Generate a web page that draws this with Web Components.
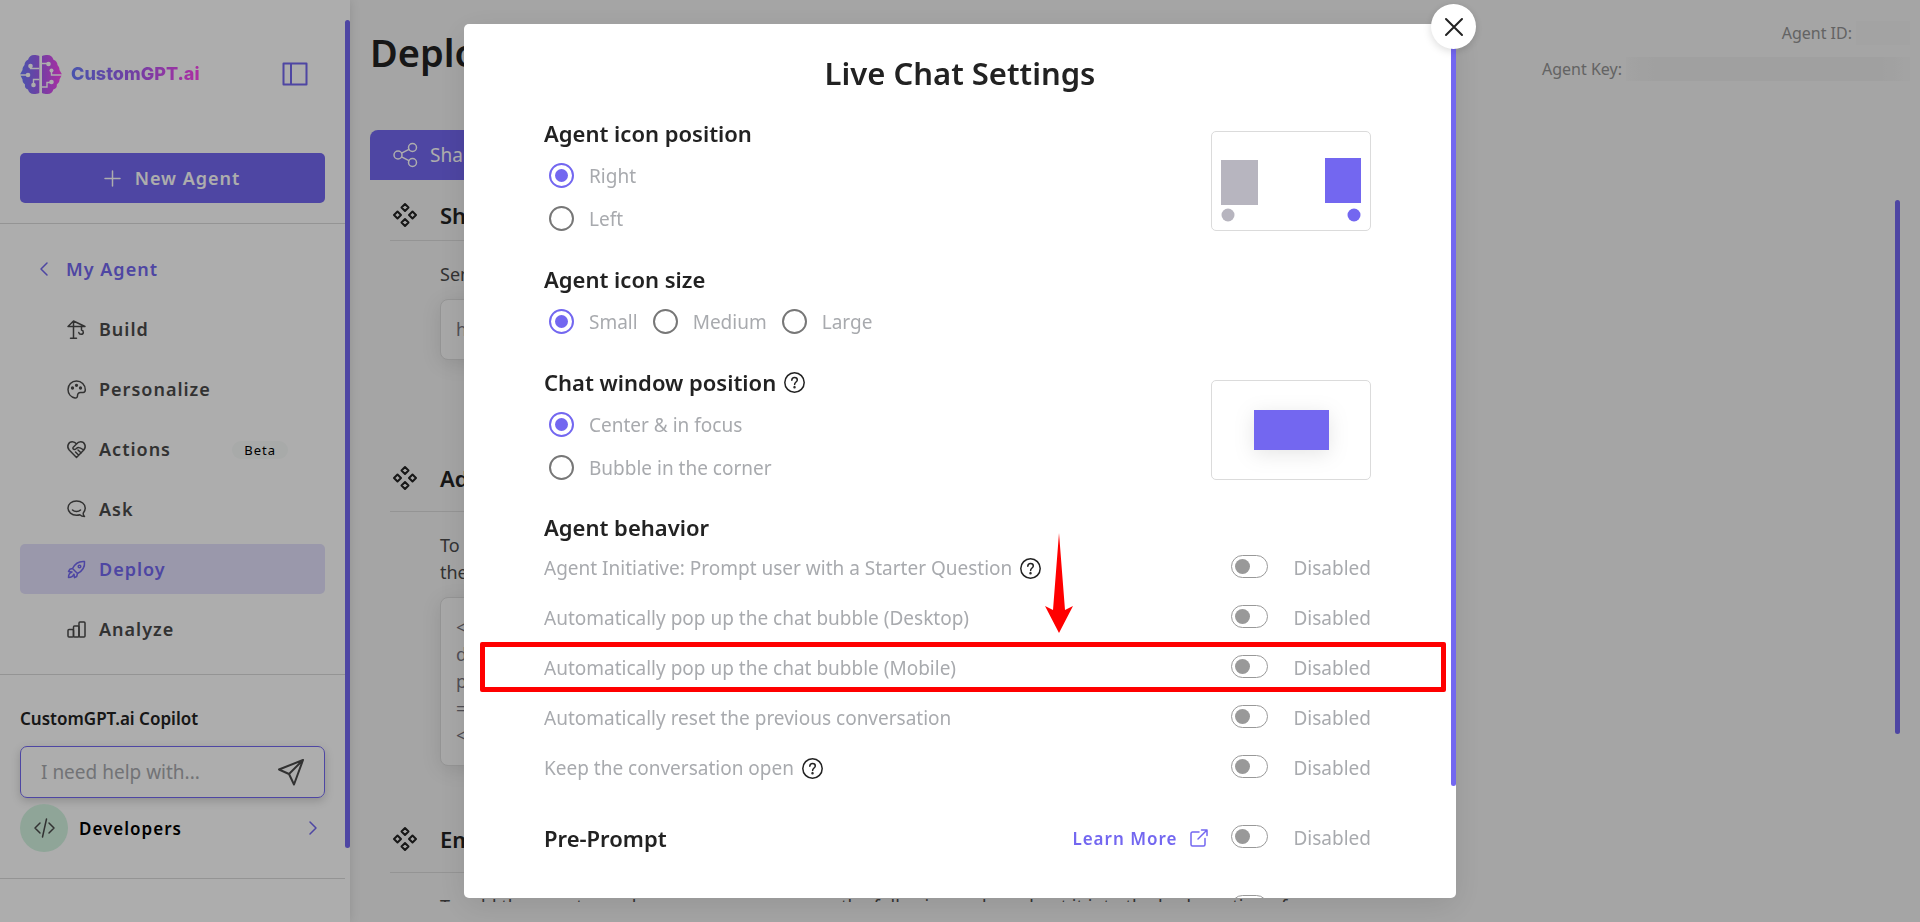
<!DOCTYPE html>
<html lang="en">
<head>
<meta charset="utf-8">
<title>Deploy | CustomGPT.ai</title>
<style>
    :root {
        --purple: #7367f0;
        --ink: #222222;
        --body: #4b4b4b;
        --muted: #a8aaae;
        --line: #dbdbdb;
        --page: #f3f3f3;
    }

    * {
        box-sizing: border-box;
    }

    body {
        margin: 0;
        height: 100vh;
        display: flex;
        overflow: hidden;
        background: var(--page);
        color: var(--ink);
        font-family: "Noto Sans", "Open Sans", sans-serif;
        font-size: 19px;
    }

    deploy-page {
        flex: 1;
        min-width: 0;
    }
</style>
</head>
<body>
    <app-sidebar></app-sidebar>
    <deploy-page></deploy-page>
    <settings-dialog heading="Live Chat Settings"></settings-dialog>

<script>
const icons = {
    panel: '<path d="M1.5 1.5h23v21h-23zM9 1.5v21" stroke-width="2"/>',
    plus: '<path d="M7.500 0v15M0 7.500h15"/>',
    back: '<path d="M7 1L1 7l6 6"/>',
    next: '<path d="M1 1l6 6-6 6"/>',
    crane: '<path d="M6.500 1v17M3.500 18.300h6M1 6.500h17M1 6.500L6.500 1 18 6.500M14.500 6.500v3.500c2.500.6 2.500 4.300-.5 4.300-1.300 0-2-.7-2.200-1.700"/>',
    palette: '<path d="M9.500 1C4.600 1 1 4.600 1 9.500c0 4.200 3 7.600 7 8.500 1.600.3 2.500-.8 2.500-2.200 0-2 .9-3.300 3-3.300h2.600c1.300 0 2.200-1 2.200-2.700C18.300 4.700 14.400 1 9.500 1z"/><circle cx="9.500" cy="5.300" r=".9" fill="currentColor"/><circle cx="5.500" cy="8" r=".9" fill="currentColor"/><circle cx="13.500" cy="8" r=".9" fill="currentColor"/>',
    handshake: '<path d="M9.500 17.500L2.200 10C-.8 6.500 1.500 1.800 5.300 1.800c1.800 0 3.200.8 4.200 2.200 1-1.400 2.400-2.200 4.200-2.200 3.800 0 6.100 4.700 3.100 8.200zM9.500 4L6 7.500c-.7 1.700 1.600 2.500 2.800 1.500l1.700-1.300c1.700-.6 3.200.2 6.200 2.300M11 10l3.200 3M8.500 12l3 3"/>',
    ask: '<path d="M9.500 1C4.600 1 1 4 1 8s3.600 7.200 8.500 7.200c1.200 0 2.300-.1 3.300-.5 1 1 2.700 1.800 4.700 1.800-1-1-1.400-2.400-1.200-3.500C17.500 11.700 18.200 10 18.200 8c0-4-3.700-7-8.700-7zM5.500 10c2 2 6 2 8 0"/>',
    rocket: '<path d="M5.500 8.500C8 3.500 12 1 17.500 1.500 18 7 15.500 11 10.500 13.500zM5.500 8.500L2.800 9.300 1.500 11.500l3.500.5M10.500 13.500l-.8 3-2.200 1.200L7 14.200M4.800 12.300C2.500 12.800 1.500 15 1.500 17.500c2.500 0 4.600-1 5.200-3.200"/><circle cx="12.500" cy="6.500" r="1.300"/>',
    bars: '<rect x="1" y="9.500" width="5.500" height="7.500" rx="1"/><rect x="6.500" y="6" width="5.500" height="11" rx="1"/><rect x="12" y="2" width="6" height="15" rx="1"/>',
    send: '<path d="M25 1L1 10.500l10 4.500 5 10.500zM25 1L11 15" stroke-width="2"/>',
    code: '<path d="M6 4L1 9l5 5M15 4l5 5-5 5M12.500 0l-4 18"/>',
    share: '<circle cx="5" cy="12" r="4"/><circle cx="19.500" cy="4.500" r="4"/><circle cx="19.500" cy="19.500" r="4"/><path d="M8.600 10.200l7.300-3.800M8.600 13.800l7.300 3.800"/>',
    diamonds: '<path d="M12 1l3.500 3.500L12 8 8.500 4.500zM12 16l3.500 3.500L12 23l-3.500-3.500zM4.500 8.500L8 12l-3.500 3.500L1 12zM19.500 8.500L23 12l-3.500 3.500L16 12z" stroke-width="2"/>',
    close: '<path d="M1 1l16 16M17 1L1 17" stroke-width="2"/>',
    help: '<circle cx="10.500" cy="10.500" r="9.700"/><path d="M7.800 8.300c0-3.800 5.500-3.500 5.500-.3 0 2-2.700 2.100-2.700 4.400"/><circle cx="10.500" cy="15.300" r=".5" fill="currentColor"/>',
    external: '<path d="M9 3H2.500C1.600 3 1 3.600 1 4.500v11c0 .9.600 1.500 1.500 1.500h11c.9 0 1.500-.6 1.500-1.500V9.500M11.500 1H17v5.500M17 1L8 10"/>'
};

class UiIcon extends HTMLElement {
    constructor() {
        super();
        this.attachShadow({ mode: 'open' });
    }

    connectedCallback() {
        const size = this.getAttribute('size') || '19 19';
        const [w, h] = size.split(' ');
        this.shadowRoot.innerHTML = `
            <style>
            :host { display: inline-flex; flex: none; }
            svg { display: block; overflow: visible; }
            </style>
            <svg width="${w}" height="${h}" viewBox="0 0 ${w} ${h}" fill="none" stroke="currentColor"
                stroke-width="1.5" stroke-linecap="round" stroke-linejoin="round" aria-hidden="true">
                ${icons[this.getAttribute('name')]}
            </svg>
        `;
    }
}
window.customElements.define('ui-icon', UiIcon);

/* ---------- sidebar ---------- */

class BrandLogo extends HTMLElement {
    constructor() {
        super();
        this.attachShadow({ mode: 'open' });
        this.shadowRoot.innerHTML = `
            <style>
            :host { display: flex; align-items: center; gap: 9px; }
            span {
                font: 800 18px/24px Inter, sans-serif;
                background: linear-gradient(90deg, #6b7cff, #a95cf0 50%, #ff44f0);
                -webkit-background-clip: text;
                background-clip: text;
                color: transparent;
            }
            </style>
            <svg width="42" height="39" viewBox="0 0 42 39" aria-hidden="true">
                <defs>
                    <linearGradient id="g" gradientUnits="userSpaceOnUse" x1="0" y1="0" x2="42" y2="0">
                        <stop offset="0" stop-color="#6b7cff"/>
                        <stop offset=".5" stop-color="#a95cf0"/>
                        <stop offset="1" stop-color="#ff44f0"/>
                    </linearGradient>
                </defs>
                <path fill="url(#g)" d="M19.300 1v37c-1.500.8-3.500 1-5.300 1-3.500 0-5.500-2-6-4.500C5.500 34 4.500 32 5 29.500 3 28 2.500 26.500 2.500 24.500L0 19.500l2.500-4.500c0-2 .7-3.500 2-5C4.500 7.500 6 5.500 8 4.800 9 1.800 11 0 14 0c2 0 3.800.2 5.300 1z"/>
                <path fill="url(#g)" d="M22 1v37c1.500.8 3.500 1 5.300 1 3.500 0 5.500-2 6-4.500 2.500-.5 4-2.500 3.500-5 2-1.500 2.700-3 2.700-5L42 19.500 39.500 15c0-2-.7-3.500-2-5 0-2.500-1.700-4.500-4-5.200C32.500 1.800 30.500 0 27.500 0c-2 0-4 .2-5.500 1z"/>
                <g stroke="#fff" stroke-width="1.400" fill="none">
                    <path d="M10.500 11v2.500h8.800M0 20h8M13.500 30v-5.500h5.800M22 8.500h6M31.500 15v5H42M31 27.500h-4V32h-5"/>
                </g>
                <g fill="#fff">
                    <circle cx="10.500" cy="11" r="2.300"/><circle cx="8" cy="20" r="2.300"/><circle cx="13.500" cy="30" r="2.300"/>
                    <circle cx="28.500" cy="9" r="2.300"/><circle cx="31.500" cy="15.500" r="2"/><circle cx="31.500" cy="27" r="2.300"/>
                </g>
            </svg>
            <span>CustomGPT.ai</span>
        `;
    }
}
window.customElements.define('brand-logo', BrandLogo);

class NavItem extends HTMLElement {
    constructor() {
        super();
        this.attachShadow({ mode: 'open' });
        this.shadowRoot.innerHTML = `
            <style>
            :host { display: block; color: var(--body); }
            :host([active]) { color: var(--purple); }
            a {
                display: flex;
                align-items: center;
                gap: 13px;
                height: 50px;
                padding: 0 37px 0 47px;
                border-radius: 5px;
                color: inherit;
                text-decoration: none;
                font-weight: 600;
                font-size: 18px;
                letter-spacing: 1px;
            }
            :host([active]) a { background: #e3e1fc; }
            slot[name="badge"] { display: block; margin-left: auto; }
            ::slotted([slot="badge"]) {
                padding: 0 12px;
                border-radius: 13px;
                background: #f8fbfa;
                color: #000;
                font-size: 13px;
                font-weight: 400;
                line-height: 25px;
            }
            </style>
            <a href="#">
                <ui-icon name="${this.getAttribute('icon')}"></ui-icon>
                <slot></slot>
                <slot name="badge"></slot>
            </a>
        `;
    }
}
window.customElements.define('nav-item', NavItem);

class CopilotBox extends HTMLElement {
    constructor() {
        super();
        this.attachShadow({ mode: 'open' });
        this.shadowRoot.innerHTML = `
            <style>
            :host { display: block; }
            label { display: block; font-size: 17px; font-weight: 600; line-height: 26px; margin-bottom: 14px; }
            .field {
                display: flex;
                align-items: center;
                height: 52px;
                padding: 0 20px;
                border: 1px solid var(--purple);
                border-radius: 7px;
                box-shadow: 0 3px 10px rgba(0, 0, 0, .18);
                box-sizing: border-box;
            }
            input {
                flex: 1;
                min-width: 0;
                padding: 0;
                border: 0;
                outline: 0;
                background: none;
                font: inherit;
                font-size: 19px;
            }
            input::placeholder { color: var(--muted); }
            button { display: flex; padding: 0; border: 0; background: none; color: var(--body); }
            </style>
            <label for="ask">CustomGPT.ai Copilot</label>
            <div class="field">
                <input id="ask" type="text" placeholder="I need help with...">
                <button type="button" aria-label="Send"><ui-icon name="send" size="26 26"></ui-icon></button>
            </div>
        `;
    }
}
window.customElements.define('copilot-box', CopilotBox);

class AppSidebar extends HTMLElement {
    constructor() {
        super();
        this.attachShadow({ mode: 'open' });
        this.shadowRoot.innerHTML = `
            <style>
            :host {
                display: flex;
                flex: none;
                width: 350px;
                background: #fff;
                box-shadow: 0 0 10px rgba(0, 0, 0, .12);
            }
            .content { flex: 1; min-width: 0; }
            .scroll { flex: none; width: 5px; height: calc(90% - 2px); margin-top: 20px; border-radius: 3px; background: var(--purple); }
            header { display: flex; justify-content: space-between; align-items: center; height: 148px; padding: 0 37px 0 20px; }
            button { border: 0; background: none; color: var(--purple); font: inherit; padding: 0; display: flex; }
            .new {
                width: calc(100% - 40px);
                height: 50px;
                margin: 5px 20px 20px;
                align-items: center;
                justify-content: center;
                gap: 15px;
                border-radius: 5px;
                background: var(--purple);
                color: #fff;
                font-size: 18px;
                font-weight: 600;
                letter-spacing: 1px;
            }
            hr { margin: 0; border: 0; border-top: 1px solid var(--line); }
            nav { display: grid; gap: 10px; padding: 20px; }
            .back {
                display: flex;
                align-items: center;
                gap: 18px;
                height: 50px;
                padding-left: 20px;
                color: var(--purple);
                text-decoration: none;
                font-size: 18px;
                font-weight: 600;
                letter-spacing: 1px;
            }
            copilot-box { padding: 31px 20px 0; }
            .developers {
                display: flex;
                align-items: center;
                gap: 11px;
                margin: 6px 20px 26px;
                padding-right: 8px;
                color: #000;
                text-decoration: none;
                font-size: 17px;
                font-weight: 600;
                letter-spacing: 1px;
            }
            .developers > ui-icon { margin-left: auto; color: var(--purple); }
            .circle {
                display: grid;
                place-items: center;
                width: 48px;
                height: 48px;
                border-radius: 50%;
                background: #d3f4e1;
                color: var(--body);
            }
            </style>
            <div class="content">
                <header>
                    <brand-logo></brand-logo>
                    <button type="button" aria-label="Toggle sidebar"><ui-icon name="panel" size="26 24"></ui-icon></button>
                </header>
                <button type="button" class="new"><ui-icon name="plus" size="15 15"></ui-icon>New Agent</button>
                <hr>
                <nav>
                    <a class="back" href="#"><ui-icon name="back" size="8 14"></ui-icon>My Agent</a>
                    <nav-item icon="crane">Build</nav-item>
                    <nav-item icon="palette">Personalize</nav-item>
                    <nav-item icon="handshake">Actions<span slot="badge">Beta</span></nav-item>
                    <nav-item icon="ask">Ask</nav-item>
                    <nav-item icon="rocket" active>Deploy</nav-item>
                    <nav-item icon="bars">Analyze</nav-item>
                </nav>
                <hr>
                <copilot-box></copilot-box>
                <a class="developers" href="#">
                    <span class="circle"><ui-icon name="code" size="21 18"></ui-icon></span>
                    Developers
                    <ui-icon name="next" size="8 14"></ui-icon>
                </a>
                <hr>
            </div>
            <div class="scroll"></div>
        `;
    }
}

/* ---------- page behind the dialog ---------- */

class ShareSection extends HTMLElement {
    constructor() {
        super();
        this.attachShadow({ mode: 'open' });
        this.shadowRoot.innerHTML = `
            <style>
            :host { display: block; padding-bottom: 58px; }
            header { display: flex; align-items: center; gap: 23px; padding: 0 4px 18px 3px; border-bottom: 1px solid var(--line); }
            :host([first]) header { padding-bottom: 10px; }
            :host([first]) { padding-bottom: 103px; }
            h2 { margin: 0; font-size: 22px; font-weight: 600; line-height: 30px; }
            .body { padding: 20px 0 0 50px; color: var(--body); font-size: 18px; line-height: 27px; }
            ::slotted(p) { margin: 0; }
            ::slotted(.code) {
                margin-top: 11px;
                padding: 16px 15px;
                border: 1px solid var(--line);
                border-radius: 8px;
                background: #f8f8f8;
                box-shadow: 0 4px 20px rgba(0, 0, 0, .1);
                color: #77757f;
            }
            </style>
            <header><ui-icon name="diamonds" size="24 24"></ui-icon><h2>${this.getAttribute('heading')}</h2></header>
            <div class="body"><slot></slot></div>
        `;
    }
}
window.customElements.define('share-section', ShareSection);

class DeployPage extends HTMLElement {
    constructor() {
        super();
        this.attachShadow({ mode: 'open' });
        this.shadowRoot.innerHTML = `
            <style>
            :host { display: flex; flex-direction: column; height: 100vh; padding: 0 20px 20px; overflow: hidden; box-sizing: border-box; }
            header { display: flex; justify-content: space-between; align-items: flex-start; height: 130px; flex: none; }
            h1 { margin: 0; padding-top: 26px; font-size: 38px; font-weight: 600; line-height: 52px; }
            dl { display: grid; justify-items: end; gap: 12px; margin: 0; padding-top: 21px; margin-right: -10px; color: #929292; font-size: 16px; line-height: 24px; }
            dl div { display: flex; gap: 4px; }
            dd { margin: 0; width: 54px; background: #f0f0f0; }
            dd.key { width: 284px; background: linear-gradient(90deg, #f0f0f0, #ececec 10%, #ececec 90%, #f1f1f1); }
            .tab {
                display: flex;
                align-items: center;
                gap: 13px;
                width: 200px;
                height: 50px;
                flex: none;
                padding: 0 23px;
                border: 0;
                border-radius: 8px 8px 0 0;
                background: var(--purple);
                color: #fff;
                font: inherit;
                font-size: 19px;
            }
            .area { display: flex; justify-content: space-between; flex: 1; min-height: 0; padding-top: 20px; overflow: hidden; }
            .list { width: 66%; padding-left: 20px; }
            .scroll { flex: none; width: 5px; height: 76%; border-radius: 3px; background: var(--purple); }
            </style>
            <header>
                <h1>Deploy</h1>
                <dl>
                    <div><dt>Agent ID:</dt><dd></dd></div>
                    <div><dt>Agent Key:</dt><dd class="key"></dd></div>
                </dl>
            </header>
            <button type="button" class="tab"><ui-icon name="share" size="24 24"></ui-icon>Share</button>
            <div class="area">
                <div class="list">
                    <share-section heading="Sh" first>
                        <p>Sen</p>
                        <div class="code">h</div>
                    </share-section>
                    <share-section heading="Ad">
                        <p>To<br>the</p>
                        <div class="code">&lt;<br>d<br>p<br>=<br>&lt;</div>
                    </share-section>
                    <share-section heading="Em">
                        <p>To add the agent anywhere on your page, copy the following code and put it into the body section of</p>
                    </share-section>
                </div>
                <div class="scroll"></div>
            </div>
        `;
    }
}

/* ---------- dialog ---------- */

class HelpTip extends HTMLElement {
    constructor() {
        super();
        this.attachShadow({ mode: 'open' });
        this.shadowRoot.innerHTML = `
            <style>
            :host { display: inline-flex; color: var(--ink); }
            button { display: flex; padding: 0; border: 0; background: none; color: inherit; }
            </style>
            <button type="button" aria-label="Help"><ui-icon name="help" size="21 21"></ui-icon></button>
        `;
    }
}
window.customElements.define('help-tip', HelpTip);

// options is a comma separated list, the first one is preselected
class RadioSetting extends HTMLElement {
    constructor() {
        super();
        this.attachShadow({ mode: 'open' });
        const options = this.getAttribute('options').split(',');
        this.shadowRoot.innerHTML = `
            <style>
            :host { display: flex; justify-content: space-between; align-items: flex-end; }
            fieldset { margin: 0; padding: 0; border: 0; min-width: 0; }
            legend { display: flex; align-items: center; gap: 8px; padding: 0 0 4px; height: 34px; font-size: 22px; font-weight: 600; }
            .options { display: flex; flex-direction: column; }
            :host([inline]) .options { flex-direction: row; gap: 15px; }
            label { display: flex; align-items: center; gap: 15px; height: 43px; padding-left: 5px; color: var(--muted); font-size: 19px; }
            :host([inline]) label + label { padding-left: 0; }
            input {
                appearance: none;
                display: grid;
                place-items: center;
                width: 25px;
                height: 25px;
                margin: 0;
                border: 2px solid #777;
                border-radius: 50%;
            }
            input:checked { border-color: var(--purple); }
            input:checked::before { content: ""; width: 13px; height: 13px; border-radius: 50%; background: var(--purple); }
            ::slotted([slot="preview"]) { margin-bottom: 9px; }
            </style>
            <fieldset>
                <legend>${this.getAttribute('heading')}<slot name="help"></slot></legend>
                <div class="options">
                    ${options.map((o, i) => `<label><input type="radio" name="option"${i ? '' : ' checked'}>${o}</label>`).join('')}
                </div>
            </fieldset>
            <slot name="preview"></slot>
        `;
    }
}
window.customElements.define('radio-setting', RadioSetting);

class PositionPreview extends HTMLElement {
    constructor() {
        super();
        this.attachShadow({ mode: 'open' });
        const corner = `
            <rect x="9" y="28" width="37" height="45" fill="#b7b5bf"/><circle cx="16" cy="83" r="6.500" fill="#b7b5bf"/>
            <rect x="113" y="26" width="36" height="45" fill="#7367f0"/><circle cx="142" cy="83" r="6.500" fill="#7367f0"/>`;
        const center = '<rect class="window" x="42" y="29" width="75" height="40" fill="#7367f0"/>';
        this.shadowRoot.innerHTML = `
            <style>
            :host { display: block; border: 1px solid var(--line); border-radius: 5px; }
            svg { display: block; }
            .window { filter: drop-shadow(0 4px 10px rgba(0, 0, 0, .1)); }
            </style>
            <svg width="158" height="98" viewBox="0 0 158 98" aria-hidden="true">${this.getAttribute('type') === 'center' ? center : corner}</svg>
        `;
    }
}
window.customElements.define('position-preview', PositionPreview);

class ToggleSetting extends HTMLElement {
    constructor() {
        super();
        this.attachShadow({ mode: 'open' });
        this.shadowRoot.innerHTML = `
            <style>
            :host { display: flex; align-items: center; height: 50px; color: var(--muted); font-size: 19px; position: relative; }
            :host([title-row]) label { color: var(--ink); font-size: 22px; font-weight: 600; }
            .name { display: flex; align-items: center; gap: 8px; flex: 1; }
            input {
                appearance: none;
                display: flex;
                align-items: center;
                width: 37px;
                height: 23px;
                margin: 0 25px 4px 23px;
                padding: 0 3px;
                border: 1px solid #999;
                border-radius: 12px;
                box-sizing: border-box;
            }
            input::before { content: ""; width: 15px; height: 15px; border-radius: 50%; background: #999; }
            ::slotted(a) {
                display: flex;
                align-items: center;
                gap: 13px;
                color: var(--purple);
                text-decoration: none;
                font-size: 17px;
                font-weight: 600;
                letter-spacing: 1px;
            }
            :host([marked])::after {
                content: "";
                position: absolute;
                inset: -1px -75px 1px -64px;
                border: 5px solid #f00;
                border-radius: 2px;
            }
            </style>
            <div class="name"><label for="toggle">${this.getAttribute('label')}</label><slot name="help"></slot></div>
            <slot></slot>
            <input type="checkbox" role="switch" id="toggle">
            <span>Disabled</span>
        `;
    }
}
window.customElements.define('toggle-setting', ToggleSetting);

class SettingsDialog extends HTMLElement {
    constructor() {
        super();
        this.attachShadow({ mode: 'open' });
        this.shadowRoot.innerHTML = `
            <style>
            :host { position: fixed; inset: 0; display: grid; place-items: center; background: rgba(0, 0, 0, .32); }
            .dialog {
                position: relative;
                display: flex;
                width: min(992px, 94%);
                height: calc(100vh - 48px);
                border-radius: 5px;
                background: #fff;
                box-shadow: 0 8px 32px rgba(0, 0, 0, .1);
            }
            .content { flex: 1; min-width: 0; padding: 29px 80px 0; overflow: hidden; box-sizing: border-box; }
            .scroll { flex: none; width: 5px; height: calc(87% + 2px); border-radius: 0 0 3px 3px; background: var(--purple); }
            h1 { margin: 0 0 23px; padding-left: 5px; text-align: center; font-size: 31px; font-weight: 600; line-height: 40px; }
            h2 { margin: 0; font-size: 22px; font-weight: 600; line-height: 32px; }
            radio-setting { margin-bottom: 22px; }
            .behavior { position: relative; }
            .arrow { position: absolute; left: 501px; top: 22px; }
            .prompts { display: grid; gap: 20px; margin-top: 20px; }
            .close {
                position: absolute;
                top: -20px;
                right: -20px;
                display: grid;
                place-items: center;
                width: 45px;
                height: 45px;
                padding: 0;
                border: 0;
                border-radius: 50%;
                background: #fff;
                color: var(--ink);
                box-shadow: 0 2px 8px rgba(0, 0, 0, .15);
            }
            </style>
            <div class="dialog" role="dialog" aria-labelledby="heading">
                <div class="content">
                    <h1 id="heading">${this.getAttribute('heading')}</h1>
                    <radio-setting heading="Agent icon position" options="Right,Left">
                        <position-preview slot="preview" type="corner"></position-preview>
                    </radio-setting>
                    <radio-setting heading="Agent icon size" options="Small,Medium,Large" inline></radio-setting>
                    <radio-setting heading="Chat window position" options="Center &amp; in focus,Bubble in the corner">
                        <help-tip slot="help"></help-tip>
                        <position-preview slot="preview" type="center"></position-preview>
                    </radio-setting>
                    <section class="behavior">
                        <h2>Agent behavior</h2>
                        <toggle-setting label="Agent Initiative: Prompt user with a Starter Question"><help-tip slot="help"></help-tip></toggle-setting>
                        <toggle-setting label="Automatically pop up the chat bubble (Desktop)"></toggle-setting>
                        <toggle-setting label="Automatically pop up the chat bubble (Mobile)" marked></toggle-setting>
                        <toggle-setting label="Automatically reset the previous conversation"></toggle-setting>
                        <toggle-setting label="Keep the conversation open"><help-tip slot="help"></help-tip></toggle-setting>
                        <svg class="arrow" width="28" height="100" viewBox="0 0 28 100" fill="#f00" aria-hidden="true">
                            <path d="M14 0l6 77 8-4-14 27L0 73l8 4z"/>
                        </svg>
                    </section>
                    <section class="prompts">
                        <toggle-setting label="Pre-Prompt" title-row>
                            <a href="#">Learn More <ui-icon name="external" size="18 18"></ui-icon></a>
                        </toggle-setting>
                        <toggle-setting label="" title-row>
                            <a href="#" aria-label="Learn more"><ui-icon name="external" size="18 18"></ui-icon></a>
                        </toggle-setting>
                    </section>
                </div>
                <div class="scroll"></div>
                <button type="button" class="close" aria-label="Close"><ui-icon name="close" size="18 18"></ui-icon></button>
            </div>
        `;
    }
}

window.customElements.define('app-sidebar', AppSidebar);
window.customElements.define('deploy-page', DeployPage);
window.customElements.define('settings-dialog', SettingsDialog);
</script>
</body>
</html>
